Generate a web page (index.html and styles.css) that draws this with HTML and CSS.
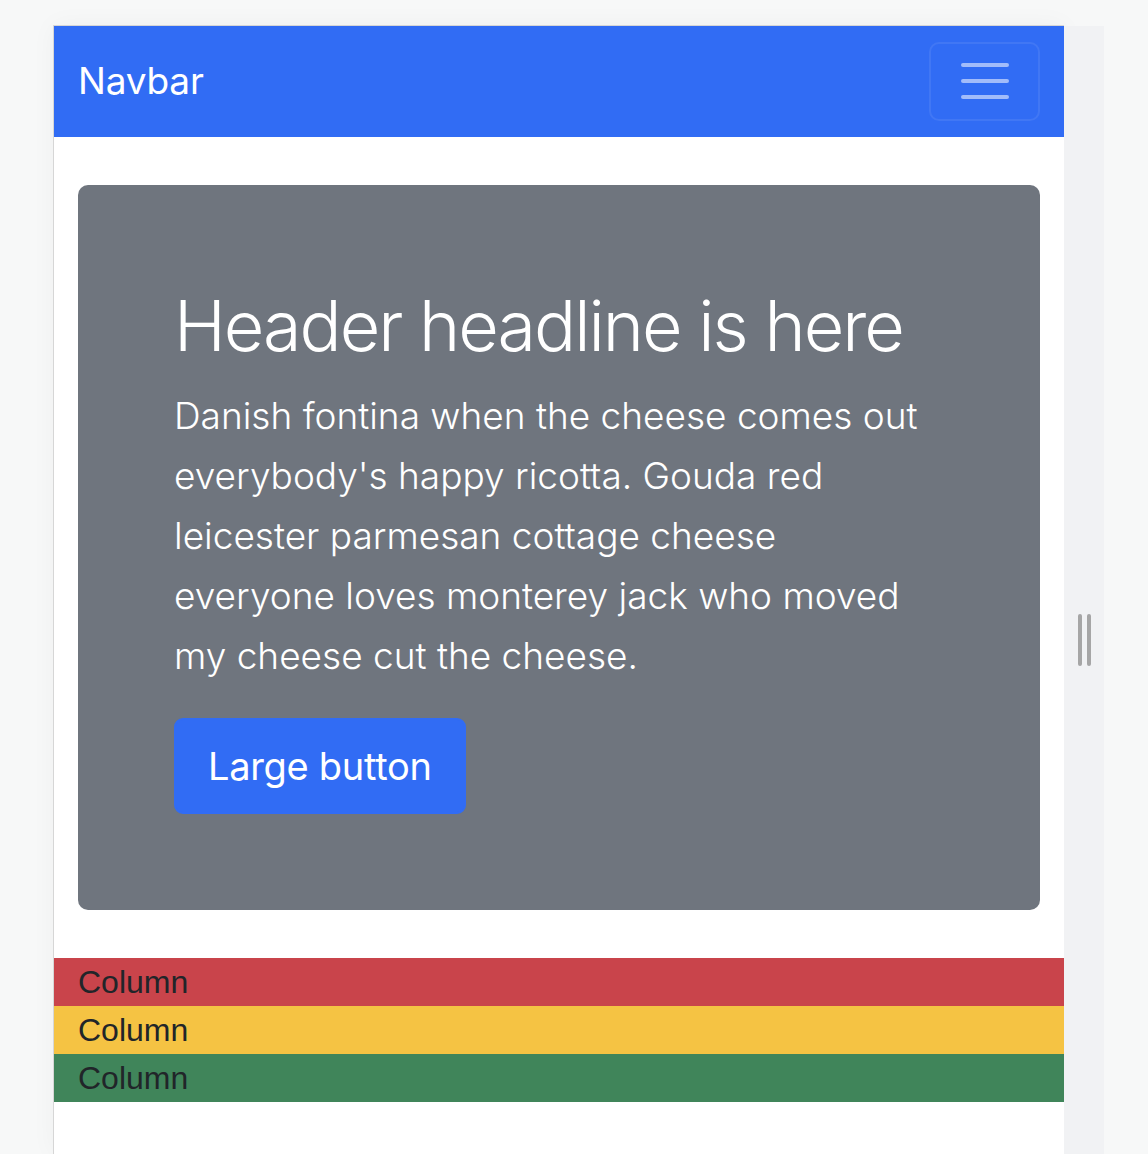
FILE: index.html
```html
<!DOCTYPE html>
<html lang="en">
<head>
<meta charset="utf-8">
<title>Navbar</title>
<link rel="stylesheet" href="styles.css">
</head>
<body>
<div class="app">
  <div class="frame">
    <nav class="navbar">
      <a class="brand" href="#">Navbar</a>
      <button class="toggler" type="button" aria-label="Toggle navigation">
        <span class="bar"></span><span class="bar"></span><span class="bar"></span>
      </button>
    </nav>
    <main class="content">
      <section class="jumbo">
        <h1 class="headline">Header headline is here</h1>
        <p class="lead">Danish fontina when the cheese comes out everybody's happy ricotta. Gouda red leicester parmesan cottage cheese everyone loves monterey jack who moved my cheese cut the cheese.</p>
        <button class="btn-lg" type="button">Large button</button>
      </section>
    </main>
    <div class="cols">
      <div class="col red">Column</div>
      <div class="col yellow">Column</div>
      <div class="col green">Column</div>
    </div>
  </div>
  <div class="panel">
    <div class="handle"><span></span><span></span></div>
  </div>
</div>
</body>
</html>
```

FILE: styles.css
```css
html, body {
  margin: 0;
  padding: 0;
}
body {
  background: #f7f8f8;
  font-family: Inter, "Noto Sans", "Liberation Sans", sans-serif;
  overflow: hidden;
}
.app {
  display: flex;
  height: 1154px;
  box-sizing: border-box;
  padding: 25px 0 0 53px;
}
.frame {
  width: 1010px;
  background: #fff;
  border-top: 1px solid #d6d6d6;
  border-left: 1px solid #d6d6d6;
  box-shadow: 0 0 24px rgba(0, 0, 0, 0.04);
}
.panel {
  width: 40px;
  margin-top: 1px;
  background: #f1f2f4;
  display: flex;
  justify-content: center;
  align-items: flex-start;
  padding-top: 588px;
}
.handle {
  display: flex;
  gap: 5px;
}
.handle span {
  display: block;
  width: 4px;
  height: 52px;
  border-radius: 2px;
  background: #a6a6a6;
}
.navbar {
  height: 111px;
  background: #316cf4;
  display: flex;
  align-items: center;
  justify-content: space-between;
  padding: 0 24px;
}
.brand {
  color: #fff;
  text-decoration: none;
  font-size: 37px;
  font-weight: 400;
  letter-spacing: -0.2px;
  margin-top: -2px;
}
.toggler {
  width: 111px;
  height: 79px;
  margin-top: -1px;
  border: 2px solid rgba(255, 255, 255, 0.08);
  border-radius: 10px;
  background: transparent;
  display: flex;
  flex-direction: column;
  align-items: center;
  justify-content: center;
  gap: 12px;
  padding: 0;
}
.toggler .bar {
  display: block;
  width: 48px;
  height: 4px;
  border-radius: 2px;
  background: rgba(255, 255, 255, 0.55);
}
.content {
  padding: 48px 24px;
}
.jumbo {
  background: #6f757e;
  border-radius: 10px;
  padding: 96px;
  color: #fff;
}
.headline {
  margin: 0 0 16px;
  font-size: 70px;
  font-weight: 300;
  line-height: 89px;
  letter-spacing: -2px;
}
.lead {
  margin: 0 0 32px;
  max-width: 750px;
  font-size: 37px;
  font-weight: 300;
  line-height: 60px;
  letter-spacing: 0;
}
.btn-lg {
  display: inline-block;
  background: #316cf4;
  color: #fff;
  border: 2px solid #316cf4;
  border-radius: 9px;
  font-family: inherit;
  font-size: 38px;
  font-weight: 400;
  line-height: 60px;
  padding: 16px 32px;
  letter-spacing: -0.3px;
}
.cols {
  display: flex;
  flex-direction: column;
}
.col {
  height: 48px;
  line-height: 48px;
  padding: 0 24px;
  font-family: "Liberation Sans", Arial, sans-serif;
  font-size: 32px;
  color: #212529;
}
.red { background: #c9444b; }
.yellow { background: #f5c343; }
.green { background: #40855a; }
```
